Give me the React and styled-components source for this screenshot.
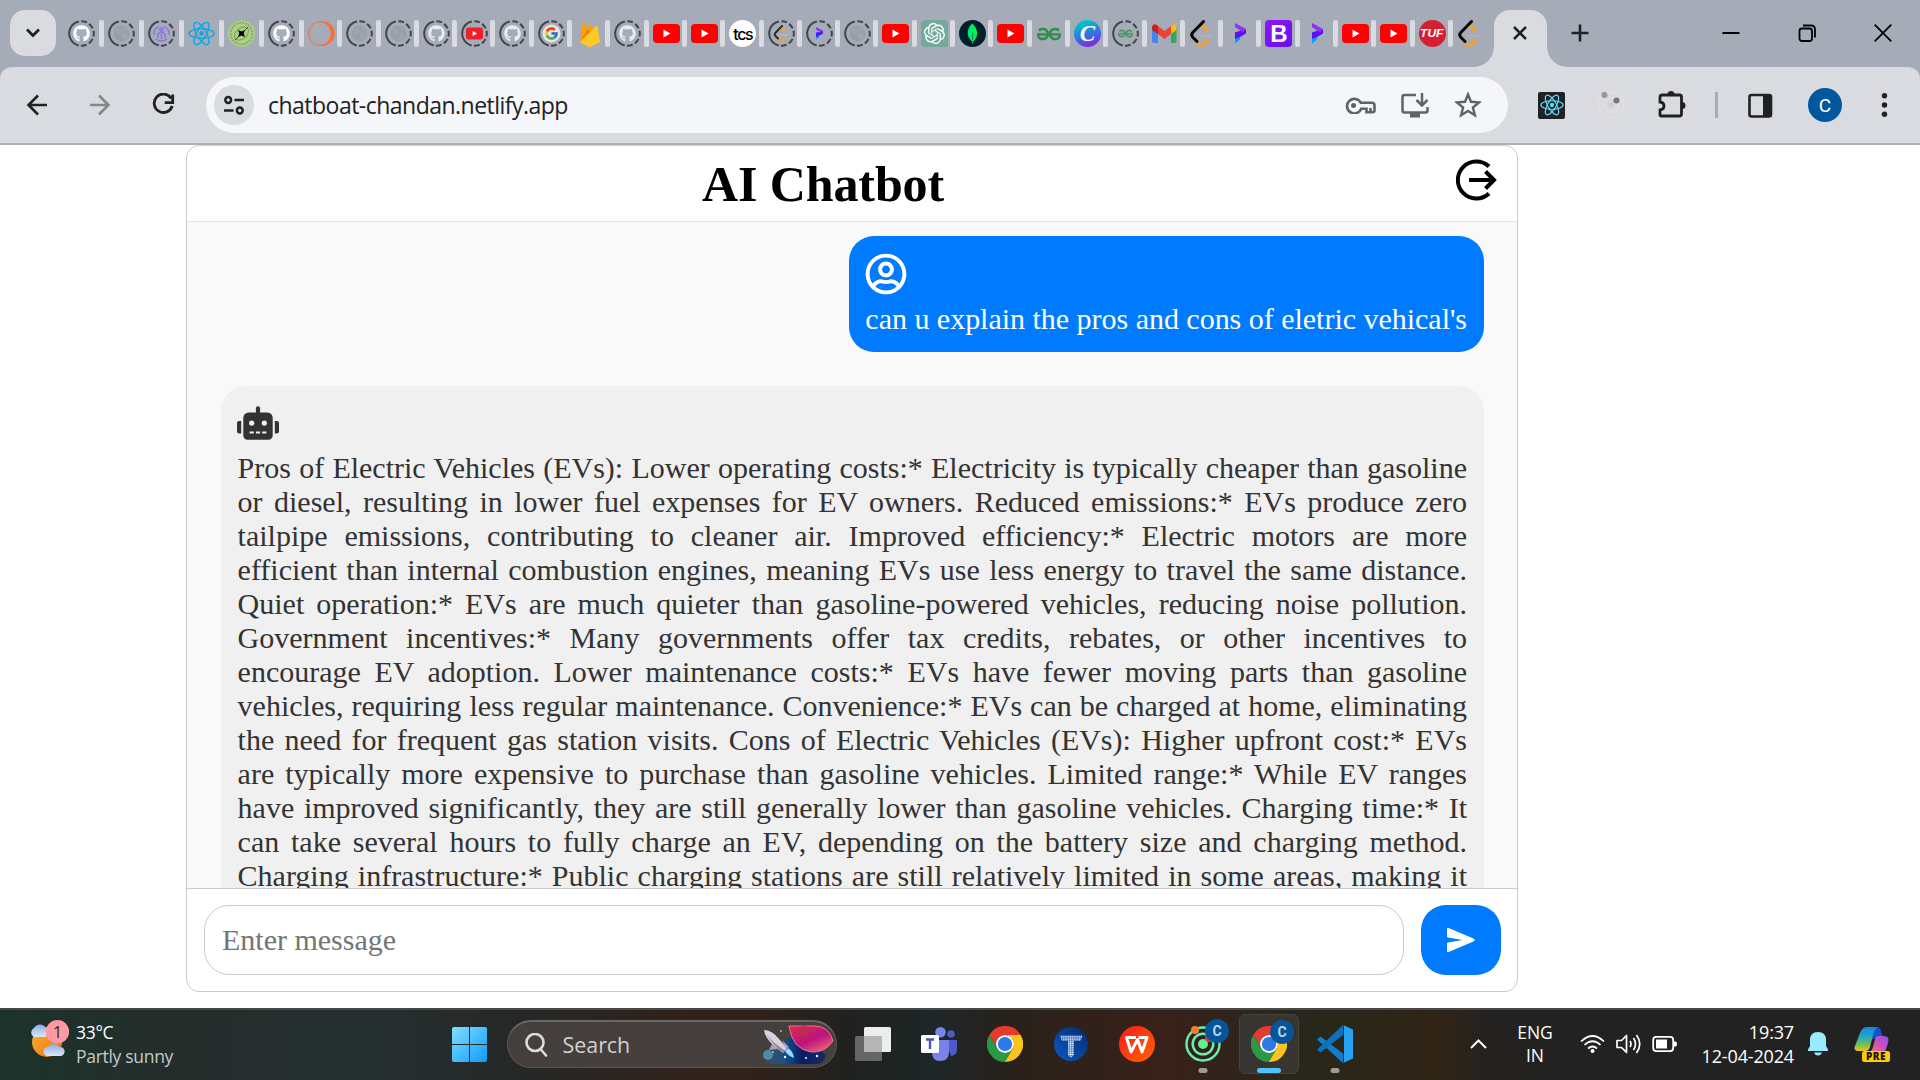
import React from 'react';
import styled, { createGlobalStyle, css } from 'styled-components';
import { FaGithub, FaRegUserCircle, FaRobot } from 'react-icons/fa';
import { SiOpenai, SiMongodb, SiGeeksforgeeks } from 'react-icons/si';
import { FcGoogle } from 'react-icons/fc';

const uiFont = '"Open Sans", "Noto Sans", sans-serif';
const serif = '"Liberation Serif", "Times New Roman", serif';

const GlobalStyle = createGlobalStyle`
  * { box-sizing: border-box; }
  html, body { margin: 0; padding: 0; background: #fff; }
  body { width: 1920px; height: 1080px; overflow: hidden; }
  svg { display: block; flex: none; }
`;

const Screen = styled.div`
  width: 1920px;
  height: 1080px;
  display: flex;
  flex-direction: column;
  background: #fff;
  font-family: ${uiFont};
  overflow: hidden;
`;

/* ---------- browser chrome ---------- */

const TabStrip = styled.header`
  height: 67px;
  flex: none;
  display: flex;
  align-items: flex-start;
  padding: 10px 28px 0 10px;
  background: #a6abb8;
`;

const TabSearch = styled.button`
  width: 46px;
  height: 46px;
  flex: none;
  margin: 0 12px 0 0;
  padding: 0;
  border: 0;
  border-radius: 15px;
  background: #d9dbe0;
  display: grid;
  place-items: center;
`;

const TabList = styled.div`
  display: flex;
  width: 1426px;
  padding-top: 10px;
  flex: none;
`;

const Tab = styled.div`
  width: ${(p) => (p.$wide ? 40 : 38.3)}px;
  height: 27px;
  flex: none;
  display: flex;
  justify-content: space-between;
  padding-right: 4px;
`;

const Separator = styled.i`
  width: 5px;
  height: 27px;
  border-radius: 2px;
  background: #d9dbe0;
`;

const Favicon = styled.span`
  width: 27px;
  height: 27px;
  flex: none;
  display: grid;
  place-items: center;
  font: 700 ${(p) => p.$size || 14}px/1 ${uiFont};
  color: ${(p) => p.$color || '#fff'};
  background: ${(p) => p.$bg || 'transparent'};
  border-radius: ${(p) => p.$radius || 0};
  > * { grid-area: 1 / 1; }
`;

const Mark = styled.b`
  font: ${(p) => p.$font};
  letter-spacing: ${(p) => p.$spacing || 0};
  transform: ${(p) => p.$transform || 'none'};
`;

const ActiveTab = styled.div`
  position: relative;
  width: 53px;
  height: 57px;
  flex: none;
  background: #d9dbe0;
  border-radius: 16px 16px 0 0;
  display: flex;
  justify-content: center;
  padding: 16px 1px 0 0;
  &::before, &::after {
    content: '';
    position: absolute;
    bottom: 0;
    width: 20px;
    height: 20px;
  }
  &::before {
    left: -20px;
    background: radial-gradient(circle at 0 0, transparent 19.5px, #d9dbe0 20px);
  }
  &::after {
    right: -20px;
    background: radial-gradient(circle at 100% 0, transparent 19.5px, #d9dbe0 20px);
  }
`;

const NewTab = styled.div`
  padding: 14px 0 0 24px;
`;

const WindowControls = styled.div`
  margin-left: auto;
  display: flex;
  gap: 58px;
  padding-top: 14px;
`;

const ToolbarBack = styled.div`
  height: 78px;
  flex: none;
  background: #a6abb8;
`;

const Toolbar = styled.nav`
  height: 78px;
  border-radius: 12px 12px 0 0;
  border-bottom: 2px solid #adafb5;
  background: #d9dbe0;
  display: flex;
  align-items: center;
  padding: 0 29px 0 25px;
`;

const NavButtons = styled.div`
  display: flex;
  gap: 39px;
  width: 181px;
`;

const AddressBar = styled.div`
  width: 1302px;
  height: 56px;
  border-radius: 28px;
  background: #f5f6f9;
  display: flex;
  align-items: center;
  padding: 0 26px 0 8px;
`;

const SiteInfo = styled.span`
  width: 40px;
  height: 40px;
  border-radius: 50%;
  background: #d9dbe0;
  display: grid;
  place-items: center;
`;

const Url = styled.span`
  margin-left: 14px;
  font-size: 23px;
  line-height: 32px;
  letter-spacing: -0.52px;
  color: #202124;
`;

const BarActions = styled.div`
  margin-left: auto;
  display: flex;
  align-items: center;
  gap: 25px;
`;

const Extensions = styled.div`
  margin-left: 30px;
  display: flex;
  align-items: center;
`;

const Extension = styled.span`
  display: flex;
  margin-left: ${(p) => p.$gap || 0}px;
`;

const BarDivider = styled.i`
  width: 3px;
  height: 26px;
  background: #a6abb8;
`;

const Avatar = styled.span`
  width: 34px;
  height: 34px;
  border-radius: 50%;
  background: #00579e;
  color: #fff;
  display: grid;
  place-items: center;
  font: 400 19px/1 Roboto, sans-serif;
`;

/* ---------- chat page ---------- */

const Page = styled.main`
  height: 863px;
  flex: none;
  padding-left: 186px;
`;

const Card = styled.section`
  width: 1332px;
  height: 847px;
  border: 1px solid #ccc;
  border-radius: 13px;
  overflow: hidden;
  display: flex;
  flex-direction: column;
  font-family: ${serif};
  background: #fff;
`;

const CardHeader = styled.div`
  height: 76px;
  flex: none;
  display: flex;
  align-items: flex-start;
  border-bottom: 1px solid wheat;
  padding-right: 19px;
`;

const Title = styled.h1`
  flex: 1;
  margin: 0;
  padding: 10px 0 0 3px;
  text-align: center;
  font-size: 50px;
  line-height: 57px;
  letter-spacing: -0.1px;
  color: #000;
`;

const Logout = styled.button`
  width: 42px;
  margin: 13px 0 0;
  padding: 0;
  border: 0;
  background: none;
`;

const Messages = styled.div`
  height: 666px;
  flex: none;
  overflow: hidden;
  display: flex;
  flex-direction: column;
  gap: 34px;
  padding: 14px 33px 0 34px;
  background: #f9f9f9;
`;

const Bubble = styled.article`
  flex: none;
  padding: 16px 17px 16px 16px;
  border-radius: 25px;
  font-size: 30px;
  line-height: 34px;
  ${(p) =>
    p.$own
      ? css`align-self: flex-end; padding-top: 17px; background: #007bff; color: #fff; letter-spacing: -0.02px;`
      : css`align-self: stretch; background: #f0f0f0; color: #333;`}
  p {
    margin: 7px 0 0 ${(p) => (p.$own ? 0 : 0.6)}px;
    text-align: justify;
    text-align-last: ${(p) => (p.$own ? 'left' : 'justify')};
  }
`;

const Composer = styled.div`
  flex: 1;
  display: flex;
  gap: 17px;
  padding: 16px 16px 16px 17px;
  border-top: 1px solid #ccc;
`;

const MessageInput = styled.input`
  width: 1200px;
  height: 70px;
  margin: 0;
  padding: 0 17px;
  border: 1px solid #ccc;
  border-radius: 25px;
  background: #fff;
  font: 30px ${serif};
  &::placeholder { color: #757575; opacity: 1; }
`;

const SendButton = styled.button`
  width: 80px;
  height: 70px;
  padding: 0;
  border: 0;
  border-radius: 25px;
  background: #007bff;
  display: grid;
  place-items: center;
`;

/* ---------- taskbar ---------- */

const Taskbar = styled.footer`
  height: 72px;
  flex: none;
  display: flex;
  align-items: center;
  padding-bottom: 2px;
  border-top: 2px solid #484848;
  color: #fff;
  background: linear-gradient(90deg, #1b332b 0, #252d2b 170px, #252f30 360px, #252827 520px,
    #30221c 680px, #30211b 760px, #20221f 850px, #1d2727 935px, #29211b 1010px, #38211a 1165px,
    #28271c 1300px, #2c2618 1380px, #302416 1440px, #242220 1490px, #222 1560px);
`;

const Weather = styled.div`
  display: flex;
  width: 452px;
  padding-left: 27px;
  gap: 7px;
`;

const WeatherText = styled.div`
  font-size: 17.5px;
  line-height: 24px;
  letter-spacing: -0.3px;
  color: #fff;
  span { display: block; color: #c5cac9; }
`;

const SearchBox = styled.div`
  width: 330px;
  height: 48px;
  margin-left: 20px;
  border-radius: 24px;
  border: 1px solid #5b5754;
  border-top: 2px solid #6b6764;
  background: #45403d;
  display: flex;
  align-items: center;
  padding: 0 2px 0 16px;
  font-size: 21.4px;
  color: #d4d1ce;
  svg:last-child { margin-left: auto; }
`;

const SearchLabel = styled.span`
  margin-left: 14.5px;
`;

const AppList = styled.div`
  display: flex;
  gap: 6px;
  margin-left: 6px;
`;

const AppTile = styled.div`
  position: relative;
  width: 60px;
  height: 60px;
  border-radius: 6px;
  display: grid;
  place-items: center;
  ${(p) => p.$active && css`background: #383531; border: 1px solid #47433e;`}
`;

const AppBadge = styled.span`
  position: absolute;
  top: 5px;
  right: 4px;
  width: 24px;
  height: 24px;
  border-radius: 50%;
  background: #07549a;
  color: #b5d8f5;
  display: grid;
  place-items: center;
  font: 700 14px/1 Roboto, sans-serif;
`;

const Running = styled.i`
  position: absolute;
  bottom: ${(p) => (p.$active ? 0 : 1)}px;
  left: 50%;
  width: ${(p) => (p.$active ? 24 : 9)}px;
  height: 5px;
  transform: translateX(-50%);
  border-radius: 3px;
  background: ${(p) => (p.$active ? '#4cc2ff' : '#9f9b97')};
`;

const Tray = styled.div`
  margin-left: auto;
  padding-right: 30px;
  display: flex;
  align-items: center;
`;

const Language = styled.div`
  width: 40px;
  margin: 0 25px 0 28px;
  text-align: center;
  font-size: 17.5px;
  line-height: 23px;
`;

const StatusIcons = styled.div`
  display: flex;
  gap: 11px;
`;

const Clock = styled.div`
  width: 117px;
  margin-right: 14px;
  text-align: right;
  font-size: 18px;
  line-height: 24px;
  letter-spacing: -0.15px;
  white-space: nowrap;
`;

const TrayIcon = styled.span`
  margin-right: ${(p) => p.$after || 0}px;
`;

/* ---------- favicons ---------- */

const Ring = () => (
  <svg width="27" height="27" viewBox="0 0 27 27">
    <circle cx="13.5" cy="13.5" r="12.3" fill="none" stroke="#41464d" strokeWidth="2"
      strokeDasharray="33 2.5 5.8 2.5 5.8 2.5 5.8 2.5 5.8 2.5 5.8 2.5" transform="rotate(103 13.5 13.5)" />
  </svg>
);

const Youtube = ({ w = 27, color = '#f00' }) => (
  <svg width={w} height={w} viewBox="0 0 27 27">
    <rect x="0" y="4" width="27" height="19" rx="4" fill={color} />
    <path d="M10.5 9.5v8l7-4z" fill="#fff" />
  </svg>
);

const Globe = () => (
  <svg width="17" height="17" viewBox="0 0 17 17">
    <circle cx="8.5" cy="8.5" r="8" fill="#9a9ea6" />
    <path d="M2 5q4-3 6 0t-3 4zM9 8q5-1 5 3t-4 3zM10 2l4 3-3 1z" fill="#a1a5ae" />
  </svg>
);

const ReactLogo = ({ size = 27, color = '#149eca', sw = 1.4 }) => (
  <svg width={size} height={size} viewBox="0 0 27 27" fill="none" stroke={color} strokeWidth={sw}>
    <ellipse cx="13.5" cy="13.5" rx="12.5" ry="4.8" />
    <ellipse cx="13.5" cy="13.5" rx="12.5" ry="4.8" transform="rotate(60 13.5 13.5)" />
    <ellipse cx="13.5" cy="13.5" rx="12.5" ry="4.8" transform="rotate(120 13.5 13.5)" />
    <circle cx="13.5" cy="13.5" r="2.4" fill={color} stroke="none" />
  </svg>
);

const Leetcode = ({ size = 27, dark = '#050505', line = '#b3b1b0' }) => (
  <svg width={size} height={size} viewBox="0 0 27 27" fill="none" strokeLinecap="round" strokeLinejoin="round" strokeWidth="3">
    <path d="M10 7.500q3-3 6.500.5l1.700 1.700" stroke="#ffa116" />
    <path d="M7 21.500l2 2q3.300 3 7 0l2.500-2.500" stroke="#ffa116" />
    <path d="M14.500 1.500L4 12.300q-2.500 2.700 0 5.200L8 21.500" stroke={dark} />
    <path d="M11 16h11" stroke={line} strokeWidth="2.300" />
  </svg>
);

const PMark = ({ size = 27 }) => (
  <svg width={size} height={size} viewBox="0 0 27 27">
    <path d="M8 12.500l5-1v8l-5 4z" fill="#00a2ff" />
    <path d="M8 12.500l11-3.500v4.500l-6 3.500-5 2z" fill="#5a10f2" />
    <path d="M8 3l11 6-3 3.500L8 7z" fill="#9130f5" />
  </svg>
);

const Gmail = () => (
  <svg width="27" height="27" viewBox="0 0 27 27">
    <path d="M1 7v14q0 2 2 2h4V10z" fill="#4285f4" />
    <path d="M20 10v13h3.500q2 0 2-2V7z" fill="#34a853" />
    <path d="M20 6v8l5.500-4V7q-.5-4-4-2z" fill="#fbbc04" />
    <path d="M7 6v8l6.500 5 6.500-5V6l-6.500 5z" fill="#ea4335" />
    <path d="M1 10l6 4V6L5 4.600Q1.500 3.500 1 7z" fill="#c5221f" />
  </svg>
);

const Firebase = () => (
  <svg width="27" height="27" viewBox="0 0 27 27">
    <path d="M4 22L7 2q.5-1 1.300 0L12 9l2-4q.6-1 1.200 0L23 22z" fill="#ffa000" />
    <path d="M4 22L12 9l3 5z" fill="#f57c00" />
    <path d="M4 22L20 6q1-.8 1.400.4L24 22l-9 4.700q-1.300.6-2.500 0z" fill="#ffca28" />
  </svg>
);

const Fingerprint = () => (
  <svg width="17" height="17" viewBox="0 0 17 17" fill="none" stroke="#8b6ce8" strokeWidth="1.300">
    <path d="M1 10A7.500 7.500 0 0 1 6 1.500M11 1.500A7.500 7.500 0 0 1 16 10M3 14q5 4 11 0M5 13V9l3.500-2L12 9v4M8.500 9v5" />
    <circle cx="8.500" cy="4.500" r="1.700" />
  </svg>
);

const Compass = () => (
  <svg width="27" height="27" viewBox="0 0 27 27">
    <circle cx="13.500" cy="13.500" r="13.300" fill="#a9d17e" />
    <circle cx="13.500" cy="13.500" r="10.800" fill="none" stroke="#7f9f70" strokeWidth="1.500" strokeDasharray="2 1.200" />
    <ellipse cx="13.500" cy="13.500" rx="8" ry="5.500" transform="rotate(-40 13.500 13.500)" fill="none" stroke="#7d9d6a" />
    <path d="M7 20L20 7" stroke="#46573f" />
    <path d="M10 10l3.500 1.500L17 10l-1.300 3.500L17 17l-3.500-1.500L10 17l1.300-3.500z" fill="#000" />
  </svg>
);

const OrangeRing = () => (
  <svg width="27" height="27" viewBox="0 0 27 27">
    <path fillRule="evenodd" fill="#ff6c37" d="M13.500 1a13.300 12.500 0 1 1 0 25a13.300 12.500 0 1 1 0-25zM12 2.200a10.700 11.300 0 1 0 0 22.600a10.700 11.300 0 1 0 0-22.600z" />
  </svg>
);

const gh = (pale) => <FaGithub size={17} color={pale ? '#e9ebf0' : '#fff'} />;

const favicons = [
  { ring: true, icon: gh() },
  { ring: true, icon: <Globe /> },
  { ring: true, icon: <Fingerprint /> },
  { icon: <ReactLogo color="#18a3df" /> },
  { icon: <Compass /> },
  { ring: true, icon: gh() },
  { icon: <OrangeRing /> },
  { ring: true, icon: <Globe /> },
  { ring: true, icon: <Globe /> },
  { ring: true, icon: gh(true) },
  { ring: true, icon: <Youtube w={17} color="#ef2029" /> },
  { ring: true, icon: gh(true) },
  { ring: true, disc: true, icon: <FcGoogle size={15} /> },
  { icon: <Firebase /> },
  { ring: true, icon: gh(true) },
  { icon: <Youtube /> },
  { icon: <Youtube /> },
  { bg: '#fff', radius: '50%', color: '#000', icon: <Mark $font={'500 16px/1 Inter, sans-serif'} $spacing="-1.3px">tcs</Mark> },
  { ring: true, icon: <Leetcode size={17} dark="#24272c" line="#b9b9bc" /> },
  { ring: true, icon: <PMark size={17} /> },
  { ring: true, icon: <Globe /> },
  { icon: <Youtube /> },
  { bg: '#75a99b', radius: '4px 4px 0 4px', icon: <SiOpenai size={21} /> },
  { bg: '#001e2b', radius: '50%', icon: <SiMongodb size={21} color="#00ed64" /> },
  { icon: <Youtube /> },
  { icon: <SiGeeksforgeeks size={24} color="#2f8d46" stroke="#2f8d46" strokeWidth=".5" /> },
  { bg: 'linear-gradient(160deg, #00c4cc 15%, #2b7be0 50%, #7d2ae8 85%)', radius: '50%', icon: <Mark $font={'italic 700 23px/1 "Liberation Serif", serif'}>C</Mark> },
  { ring: true, icon: <SiGeeksforgeeks size={15} color="#4c9462" stroke="#4c9462" strokeWidth=".7" /> },
  { icon: <Gmail /> },
  { icon: <Leetcode /> },
  { icon: <PMark /> },
  { bg: 'linear-gradient(135deg, #9013fe, #6610f2)', radius: '4px', icon: <Mark $font={'700 24px/1 "Liberation Sans", sans-serif'}>B</Mark> },
  { icon: <PMark /> },
  { icon: <Youtube /> },
  { icon: <Youtube /> },
  { bg: '#d41f30', radius: '50%', icon: <Mark $font={'italic 700 10px/1 "Liberation Sans", sans-serif'} $transform="scaleX(1.2)">TUF</Mark> },
  { icon: <Leetcode /> },
];

/* ---------- toolbar and app icons ---------- */

const Stroke = ({ w, h = w, sw = 3, color = '#202124', children, ...rest }) => (
  <svg width={w} height={h} viewBox={`0 0 ${w} ${h}`} fill="none" stroke={color} strokeWidth={sw} {...rest}>
    {children}
  </svg>
);

const Chrome = () => (
  <svg width="36" height="36" viewBox="2 2 44 44">
    <path d="M4.900 13A22 22 0 0 1 43.100 13H24A11 11 0 0 0 14.500 29.500Z" fill="#e33b2e" />
    <path d="M4.900 13L14.500 29.500A11 11 0 0 0 33.500 29.500L24 46A22 22 0 0 1 4.900 13Z" fill="#2a9a49" />
    <path d="M24 13H43.100A22 22 0 0 1 24 46L33.500 29.500A11 11 0 0 0 24 13Z" fill="#fdc51b" />
    <circle cx="24" cy="24" r="11" fill="#fff" />
    <circle cx="24" cy="24" r="8.700" fill="#2f78ea" />
  </svg>
);

const VsCode = () => (
  <svg width="36" height="38" viewBox="0 0 36 38">
    <path d="M0 14.500l3.500-3L26 28.500V38z" fill="#0e7fcb" />
    <path d="M0 24.500L26 0v10L3.500 27.500z" fill="#0b72bd" />
    <path d="M26 0l10 4.500v29L26 38q1-.5 1-2V2q0-1.500-1-2z" fill="#27a2f3" />
  </svg>
);

const Teams = () => (
  <svg width="36" height="34" viewBox="0 0 36 34">
    <circle cx="30" cy="7" r="3.800" fill="#5059c9" />
    <path d="M24 13h12v10q0 5-6 6z" fill="#5059c9" />
    <circle cx="19.500" cy="5.300" r="5.300" fill="#7b83eb" />
    <path d="M11 13h17v12q0 9-9 9-8 0-8-9z" fill="#7b83eb" />
    <rect y="8" width="18" height="18" rx="1.500" fill="#fff" />
    <path d="M5 12.500h8M9 12.500v9.500" stroke="#4b53bc" strokeWidth="2.400" />
  </svg>
);

const WeatherIcon = () => (
  <svg width="42" height="44" viewBox="0 0 42 44">
    <defs>
      <linearGradient id="sun" x1="0" y1="0" x2="1" y2="1"><stop stopColor="#f8b52e" /><stop offset="1" stopColor="#ee6d10" /></linearGradient>
      <linearGradient id="cloud" x2="0" y2="1"><stop stopColor="#8aaee8" /><stop offset="1" stopColor="#dce8fa" /></linearGradient>
    </defs>
    <circle cx="20" cy="22" r="15" fill="url(#sun)" />
    <path d="M7 17a5 5 0 0 1 0-9 7 7 0 0 1 12 0v9z" fill="url(#cloud)" />
    <path d="M21 36a4.500 4.500 0 0 1 0-9 6.500 6.500 0 0 1 11 0 4.500 4.500 0 0 1 2 9z" fill="url(#cloud)" />
    <circle cx="30.500" cy="11.800" r="11.700" fill="#ff99a4" />
    <text x="30.500" y="17.500" textAnchor="middle" fontFamily="Open Sans, sans-serif" fontSize="16" fill="#3b1d20">1</text>
  </svg>
);

const SpaceArt = () => (
  <svg width="71" height="40" viewBox="0 0 71 40">
    <defs>
      <linearGradient id="sky" x2="1"><stop stopColor="#1b6aa2" stopOpacity=".15" /><stop offset=".35" stopColor="#104b90" /><stop offset=".6" stopColor="#0a1c63" /><stop offset="1" stopColor="#1a2968" /></linearGradient>
      <linearGradient id="planet" x1="0" y1="0" x2=".7" y2="1"><stop stopColor="#de284e" /><stop offset=".6" stopColor="#bc147f" /><stop offset="1" stopColor="#ee5c7a" /></linearGradient>
    </defs>
    <path d="M3 39q0-10 8-15T34 6l29 24q-2 9-10 9z" fill="url(#sky)" />
    <path d="M26 1h26q14 0 18 15-8 12-22 11Q29 24 26 1z" fill="url(#planet)" stroke="#f07586" />
    <circle cx="41" cy="6" r="6" fill="#bf2d4f" opacity=".7" />
    <path d="M1 5q8 0 15 9l8 9-4 5-9-7Q2 13 1 5z" fill="#d9d3df" />
    <path d="M3 9q8 12 17 19l2-2.500Q11 19 3 9z" fill="#8f8799" />
    <path d="M9 19l-3 6 9-1M19 15l7 7-3 2" fill="#aaa0b4" />
    <path d="M22 26l3-3q5 3 6 10-6-2-9-7z" fill="#99d8ff" />
    <circle cx="5" cy="30" r="5" fill="#4b8bac" />
    <g fill="#fff"><circle cx="22" cy="32" r="1.200" /><circle cx="43" cy="33" r="1" /><circle cx="54" cy="31" r="1.200" /><circle cx="10" cy="27" r=".8" /><circle cx="18" cy="6" r=".8" /></g>
  </svg>
);

const Copilot = () => (
  <svg width="36" height="36" viewBox="0 0 36 36">
    <defs>
      <linearGradient id="cp1" x2="0" y2="1"><stop stopColor="#1485e8" /><stop offset=".4" stopColor="#26a7c3" /><stop offset=".75" stopColor="#7abf4c" /><stop offset="1" stopColor="#f3c51a" /></linearGradient>
      <linearGradient id="cp2" x1="1" x2="0" y2="1"><stop stopColor="#8b51f0" /><stop offset=".5" stopColor="#d150bb" /><stop offset="1" stopColor="#ff7a62" /></linearGradient>
    </defs>
    <path d="M17 1h5q4 0 5 4l2 6h-6l-6 3z" fill="#1451cf" />
    <path d="M20 1h-7Q8 1 6 7L1 20q-2 5 4 5h6q4 0 5-4l3-12q1-6 5-8z" fill="url(#cp1)" />
    <path d="M24 10h6q6 0 4 7l-3 9H14q4 0 5-5l2-8q1-3 3-3z" fill="url(#cp2)" />
    <rect x="8" y="25" width="28" height="11" rx="2.500" fill="#ffc90e" />
    <text x="22" y="34.200" textAnchor="middle" fontFamily="Open Sans, sans-serif" fontWeight="800" fontSize="10" letterSpacing=".5" fill="#1c1704">PRE</text>
  </svg>
);

const reply =
  'Pros of Electric Vehicles (EVs): Lower operating costs:* Electricity is typically cheaper than gasoline or diesel, resulting in lower fuel expenses for EV owners. Reduced emissions:* EVs produce zero tailpipe emissions, contributing to cleaner air. Improved efficiency:* Electric motors are more efficient than internal combustion engines, meaning EVs use less energy to travel the same distance. Quiet operation:* EVs are much quieter than gasoline-powered vehicles, reducing noise pollution. Government incentives:* Many governments offer tax credits, rebates, or other incentives to encourage EV adoption. Lower maintenance costs:* EVs have fewer moving parts than gasoline vehicles, requiring less regular maintenance. Convenience:* EVs can be charged at home, eliminating the need for frequent gas station visits. Cons of Electric Vehicles (EVs): Higher upfront cost:* EVs are typically more expensive to purchase than gasoline vehicles. Limited range:* While EV ranges have improved significantly, they are still generally lower than gasoline vehicles. Charging time:* It can take several hours to fully charge an EV, depending on the battery size and charging method. Charging infrastructure:* Public charging stations are still relatively limited in some areas, making it';

function BrowserTabs() {
  return (
    <TabStrip>
      <TabSearch>
        <Stroke w={14} h={10} sw={2.8}><path d="M1 1.500l6 6 6-6" /></Stroke>
      </TabSearch>
      <TabList>
        {favicons.map((f, i) => (
          <Tab key={i} $wide={i < 6}>
            <Favicon $bg={f.bg} $radius={f.radius} $color={f.color}>
              {f.ring && <Ring />}
              {f.disc && <svg width="19" height="19"><circle cx="9.500" cy="9.500" r="9" fill="#e3e5ea" /></svg>}
              {f.icon}
            </Favicon>
            {i < favicons.length - 1 && <Separator />}
          </Tab>
        ))}
      </TabList>
      <ActiveTab>
        <Stroke w={14} sw={2.5}><path d="M1 1l12 12M13 1L1 13" /></Stroke>
      </ActiveTab>
      <NewTab>
        <Stroke w={18} sw={2.6}><path d="M9 .5v17M.5 9h17" /></Stroke>
      </NewTab>
      <WindowControls>
        <Stroke w={18} sw={2} color="#000"><path d="M.5 9h17" /></Stroke>
        <Stroke w={18} sw={1.8} color="#000">
          <rect x="1.500" y="4.500" width="12.500" height="12.500" rx="2.500" />
          <path d="M5 1.500h8q4 0 4 4v8" />
        </Stroke>
        <Stroke w={18} sw={1.8} color="#000"><path d="M.7.7l16.600 16.600M17.300.7L.7 17.300" /></Stroke>
      </WindowControls>
    </TabStrip>
  );
}

function BrowserToolbar() {
  return (
    <ToolbarBack>
      <Toolbar>
        <NavButtons>
          <Stroke w={24} sw={2.6}><path d="M22 12H4M13 2.500L3.500 12l9.500 9.500" /></Stroke>
          <Stroke w={24} sw={2.6} color="#84868b"><path d="M2 12h18M11 2.500l9.500 9.500-9.500 9.500" /></Stroke>
          <Stroke w={24} sw={2.8}>
            <path d="M20.300 5.500A9.200 9.200 0 1 0 21.200 13M21.700 1.500v8.200h-8" />
          </Stroke>
        </NavButtons>
        <AddressBar>
          <SiteInfo>
            <Stroke w={20} sw={2.5}>
              <circle cx="4.200" cy="5" r="2.900" /><path d="M10.500 5H20M0 15.500h9.500" /><circle cx="15.800" cy="15.500" r="2.900" />
            </Stroke>
          </SiteInfo>
          <Url>chatboat-chandan.netlify.app</Url>
          <BarActions>
            <Stroke w={31} h={17} sw={2.6} color="#5f6368">
              <path d="M15.800 5.700H27q2.500 0 2.500 2.500v5q0 2-2 2h-6v-3.500h-5.300A7.300 7.300 0 1 1 15.800 5.700zM25.500 15v-4" />
              <circle cx="8.500" cy="8.500" r="2.500" fill="#5f6368" stroke="none" />
            </Stroke>
            <Stroke w={28} h={25} sw={2.5} color="#5f6368">
              <path d="M15 2H3.500Q1.500 2 1.500 4v13.500q0 2 2 2h21q2 0 2-2V14M21 0v12M15.500 7l5.500 5.500L26.500 7" />
              <path d="M9 20h10v4.500H9z" fill="#5f6368" stroke="none" />
            </Stroke>
            <Stroke w={28} h={28} sw={2.4} color="#5f6368">
              <path d="M14 3.500l3 7.300 8 .6-6.100 5.100 2 7.700-6.900-4.200-6.900 4.200 2-7.700L3 11.400l8-.6z" />
            </Stroke>
          </BarActions>
        </AddressBar>
        <Extensions>
          <Favicon $bg="#202124" $radius="2px"><ReactLogo size={24} color="#61dafb" sw={1.3} /></Favicon>
          <Extension $gap={32}>
            <Stroke w={28} sw={1} color="#e9e9e6">
              <circle cx="14" cy="14" r="12.500" strokeDasharray="3 1.500" /><circle cx="14" cy="14" r="7.500" strokeDasharray="3 1.500" />
              <circle cx="14" cy="14" r="3" fill="#cfcfcf" stroke="none" />
              <circle cx="7.500" cy="4" r="3" fill="#999" stroke="none" /><circle cx="19.500" cy="9.500" r="3" fill="#777" stroke="none" />
            </Stroke>
          </Extension>
          <Extension $gap={33}>
            <Stroke w={28} h={30} sw={2.8}>
              <path d="M4 5h17.500q2 0 2 2v17q0 2-2 2H3q-1 0-1-1v-5q4-.5 4-4t-4-4V7q0-2 2-2z" />
              <path d="M9.500 4.500a3.500 3.500 0 0 1 7 0zM24 12a3.500 3.500 0 0 1 0 7z" fill="#202124" stroke="none" />
            </Stroke>
          </Extension>
          <Extension $gap={29}><BarDivider /></Extension>
          <Extension $gap={30}>
            <Stroke w={25} h={25} sw={2.6}>
              <rect x="1.500" y="2" width="21.500" height="21.500" rx="2" /><path d="M15 2h8v21.500h-8z" fill="#202124" stroke="none" />
            </Stroke>
          </Extension>
          <Extension $gap={35}><Avatar>C</Avatar></Extension>
          <Extension $gap={36}>
            <svg width="13" height="26" viewBox="0 0 13 26" fill="#202124">
              <circle cx="6.500" cy="3.800" r="2.700" /><circle cx="6.500" cy="13" r="2.700" /><circle cx="6.500" cy="22.200" r="2.700" />
            </svg>
          </Extension>
        </Extensions>
      </Toolbar>
    </ToolbarBack>
  );
}

function Chat() {
  return (
    <Page>
      <Card>
        <CardHeader>
          <Title>AI Chatbot</Title>
          <Logout>
            <Stroke w={42} sw={4} color="#000">
              <path d="M33 7.500A18.500 18.500 0 1 0 33 34.500" />
              <path d="M13 21h25M29.500 12.500L38 21l-8.500 8.500" />
            </Stroke>
          </Logout>
        </CardHeader>
        <Messages>
          <Bubble $own>
            <FaRegUserCircle size={42} />
            <p>can u explain the pros and cons of eletric vehical's</p>
          </Bubble>
          <Bubble>
            <FaRobot size={42} />
            <p>{reply}</p>
          </Bubble>
        </Messages>
        <Composer>
          <MessageInput placeholder="Enter message" />
          <SendButton>
            <svg width="30" height="26" viewBox="0 0 30 26" fill="#fff">
              <path d="M1 2Q1 .3 2.600.9L28 11.800q1.700 1.200 0 2.400L2.600 25.100Q1 25.700 1 24v-7.500Q1 15.800 2 15.600L16.500 13 2 10.400Q1 10.200 1 9.500z" />
            </svg>
          </SendButton>
        </Composer>
      </Card>
    </Page>
  );
}

function WindowsTaskbar() {
  return (
    <Taskbar>
      <Weather>
        <WeatherIcon />
        <WeatherText>33°C<span>Partly sunny</span></WeatherText>
      </Weather>
      <svg width="35" height="35" viewBox="0 0 35 35">
        <defs><linearGradient id="win" x2="1" y2="1"><stop stopColor="#7de0ff" /><stop offset="1" stopColor="#109bfb" /></linearGradient></defs>
        <path d="M2 0h15v17H0V2Q0 0 2 0zM18 0h15q2 0 2 2v15H18zM0 18h17v17H2q-2 0-2-2zM18 18h17v15q0 2-2 2H18z" fill="url(#win)" />
      </svg>
      <SearchBox>
        <Stroke w={24} sw={2.6} color="#dedbd9"><circle cx="11" cy="9.500" r="8.500" /><path d="M16.500 16l5.500 6.500" strokeLinecap="round" /></Stroke>
        <SearchLabel>Search</SearchLabel>
        <SpaceArt />
      </SearchBox>
      <AppList>
        <AppTile>
          <svg width="36" height="36" viewBox="0 0 36 36">
            <rect x="9" y="1" width="27" height="25" rx="1.500" fill="#ededed" />
            <rect y="10" width="27" height="25" rx="1.500" fill="#666" />
            <path d="M9 10h18v16H9z" fill="#b6b6b6" />
          </svg>
        </AppTile>
        <AppTile><Teams /></AppTile>
        <AppTile><Chrome /></AppTile>
        <AppTile>
          <svg width="34" height="34" viewBox="0 0 34 34">
            <defs>
              <linearGradient id="tb" x1="0" y1="1" x2="1" y2="0"><stop stopColor="#0b5bc4" /><stop offset="1" stopColor="#04296f" /></linearGradient>
              <pattern id="dots" width="2.200" height="2.200" patternUnits="userSpaceOnUse"><circle cx="1.100" cy="1.100" r="1" fill="#d7e8ff" /></pattern>
            </defs>
            <circle cx="17" cy="17" r="17" fill="url(#tb)" />
            <path d="M6 8.500h22.500l-2 5.500H20v14l-3 2.500-3-2.500V14H8z" fill="url(#dots)" />
          </svg>
        </AppTile>
        <AppTile>
          <svg width="36" height="36" viewBox="0 0 36 36">
            <defs><linearGradient id="wps" x2="1" y2="1"><stop stopColor="#fa1a1d" /><stop offset="1" stopColor="#ff6500" /></linearGradient></defs>
            <circle cx="18" cy="18" r="18" fill="url(#wps)" />
            <path d="M17 11.500H7.500L12 26l6.500-12.500L23 26l5-14.500h-8.500" fill="none" stroke="#fff" strokeWidth="3" strokeLinejoin="round" />
          </svg>
        </AppTile>
        <AppTile>
          <Stroke w={36} sw={2.4} color="#6bedae">
            <circle cx="18" cy="18" r="16.500" /><circle cx="18" cy="18" r="10.300" />
            <circle cx="18" cy="18" r="5" fill="#62f090" stroke="none" />
            <circle cx="10" cy="4" r="4" fill="#f08030" stroke="none" /><circle cx="24" cy="12" r="4" fill="#cf4338" stroke="none" />
          </Stroke>
          <AppBadge>C</AppBadge>
          <Running />
        </AppTile>
        <AppTile $active>
          <Chrome />
          <AppBadge>C</AppBadge>
          <Running $active />
        </AppTile>
        <AppTile>
          <VsCode />
          <Running />
        </AppTile>
      </AppList>
      <Tray>
        <Stroke w={17} h={10} sw={2} color="#fff"><path d="M1 9l7.500-7.500L16 9" /></Stroke>
        <Language>ENG<br />IN</Language>
        <StatusIcons>
          <Stroke w={25} h={24} sw={1.7} color="#fff">
            <path d="M1 9.500q11.500-11 23 0M4.500 13q8-7.500 16 0M8 16.500q4.500-4 9 0" />
            <circle cx="12.500" cy="19" r="2" fill="#fff" stroke="none" />
          </Stroke>
          <Stroke w={25} h={24} sw={1.7} color="#fff" strokeLinejoin="round">
            <path d="M1 8.500h4.500l5-5v17l-5-5H1zM14 9q2 3 0 6M17.500 6q4 6 0 12M20.500 3q6.500 9 0 18" />
          </Stroke>
          <Stroke w={25} h={24} sw={1.8} color="#fff">
            <rect x="1.200" y="4.900" width="20" height="14.200" rx="3" />
            <path d="M4 7.500h11v9H4zM22 9.500h1.500q1.500 0 1.500 2.500t-1.500 2.500H22z" fill="#fff" stroke="none" />
          </Stroke>
        </StatusIcons>
        <Clock>19:37<br />12-04-2024</Clock>
        <TrayIcon $after={26}>
          <svg width="20" height="24" viewBox="0 0 20 24" fill="#99ebff">
            <path d="M10 0q8 0 8 8v6l2 3.500V19H0v-1.500L2 14V8q0-8 8-8zM6 20.500h8q-1 3-4 3t-4-3z" />
          </svg>
        </TrayIcon>
        <TrayIcon><Copilot /></TrayIcon>
      </Tray>
    </Taskbar>
  );
}

export default function App() {
  return (
    <Screen>
      <GlobalStyle />
      <BrowserTabs />
      <BrowserToolbar />
      <Chat />
      <WindowsTaskbar />
    </Screen>
  );
}
